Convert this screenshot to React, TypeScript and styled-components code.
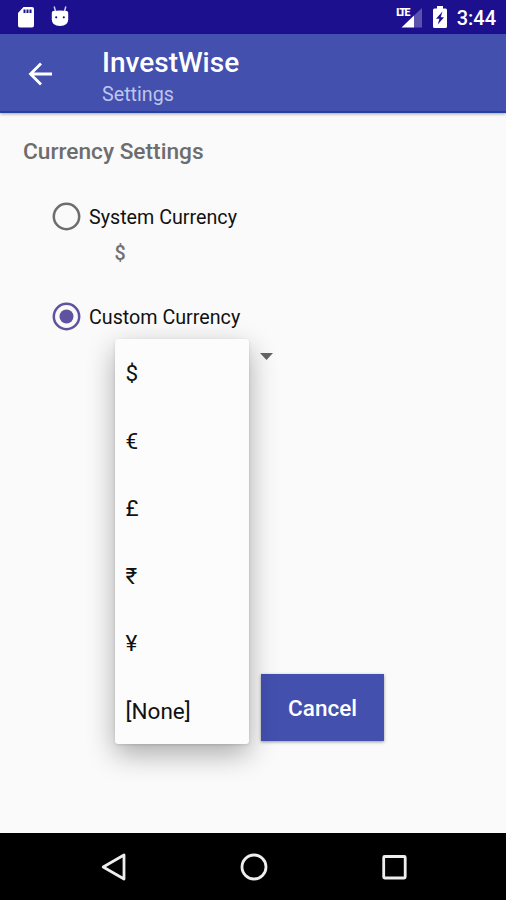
import React, { useState } from 'react';
import styled, { createGlobalStyle } from 'styled-components';

const GlobalStyle = createGlobalStyle`
  * { box-sizing: border-box; }
  html, body { margin: 0; padding: 0; overflow: hidden; }
  button { font: inherit; border: 0; padding: 0; background: none; }
`;

const Screen = styled.div`
  display: flex;
  flex-direction: column;
  width: 506px;
  height: 900px;
  background: #fafafa;
  font-family: Roboto, 'Liberation Sans', sans-serif;
  color: #111;
`;

const StatusBar = styled.header`
  display: flex;
  justify-content: space-between;
  flex: 0 0 34px;
  height: 34px;
  padding: 0 10px 0 17px;
  background: #1d108f;
`;

const StatusGroup = styled.div<{ $gap: number }>`
  display: flex;
  align-items: center;
  gap: ${(p) => p.$gap}px;
`;

const Clock = styled.span`
  font-size: 20px;
  font-weight: 500;
  line-height: 32px;
  color: #fff;
  padding-top: 2px;
`;

const AppBar = styled.div`
  display: flex;
  flex: 0 0 79px;
  padding-left: 28px;
  background: #4350ae;
  border-bottom: 2px solid #2541a0;
  box-shadow: 0 1px 3px rgba(0, 0, 0, 0.35);
`;

const BackButton = styled.button`
  display: flex;
  width: 74px;
  height: 77px;
  padding-top: 2px;
  align-items: center;
`;

const Titles = styled.div`
  display: flex;
  flex-direction: column;
  padding-top: 13px;
`;

const Title = styled.h1`
  margin: 0;
  font-size: 28px;
  font-weight: 500;
  line-height: 32px;
  color: #fff;
`;

const Subtitle = styled.span`
  font-size: 19.7px;
  line-height: 24px;
  padding-top: 4px;
  color: #bfc5ea;
`;

const Content = styled.main`
  flex: 1;
  padding: 24px 23px 0;
`;

const Heading = styled.h2`
  margin: 0;
  font-size: 22.7px;
  font-weight: 500;
  line-height: 30px;
  color: #6d6d6d;
`;

const Option = styled.label<{ $top: number }>`
  display: flex;
  align-items: flex-start;
  gap: 8px;
  height: 30px;
  margin: ${(p) => p.$top}px 0 0 29px;
  font-size: 19.7px;
  line-height: 30px;
`;

const RadioRing = styled.svg`
  flex: none;
  margin-top: -1px;
`;

const SystemValue = styled.div`
  margin: 6px 0 0 91.5px;
  font-size: 19.7px;
  font-weight: 500;
  line-height: 30px;
  color: #707070;
`;

const Spinner = styled.div`
  position: relative;
  display: flex;
  align-items: center;
  height: 48px;
  margin: -1px 0 0 91px;
  padding-left: 146px;
`;

const Menu = styled.ul`
  position: absolute;
  top: 7px;
  left: 0.6px;
  width: 134.8px;
  height: 405px;
  margin: 0;
  padding: 0;
  list-style: none;
  border-radius: 3px;
  background: #fcfcfc;
  box-shadow: 0 10px 28px rgba(0, 0, 0, 0.32), 0 1px 3px rgba(0, 0, 0, 0.12);
`;

const MenuItem = styled.li`
  height: 67.5px;
  padding-left: 11px;
  font-size: 22.5px;
  line-height: 69px;
`;

const Actions = styled.div`
  display: flex;
  padding: 294px 0 0 238px;
`;

const CancelButton = styled.button`
  width: 123px;
  height: 67px;
  background: #4350ae;
  color: #fff;
  font-size: 22.5px;
  font-weight: 500;
  line-height: 68px;
  box-shadow: 0 1px 3px rgba(0, 0, 0, 0.4);
`;

const NavBar = styled.nav`
  display: flex;
  justify-content: space-between;
  align-items: center;
  flex: 0 0 67px;
  padding: 0 97.3px 0 98.7px;
  background: #000;
`;

const NavButton = styled.button`
  display: flex;
`;

const SdCardIcon = () => (
  <svg width="18" height="22" viewBox="0 0 18 22">
    <path fill="#fff" fillRule="evenodd" d="M6.500 1H15q2 0 2 2v16.500q0 2-2 2H3q-2 0-2-2V7zM6.500 3.500v3.500h2V3.500zm3 0v3.500h2V3.500zm3 0v3.500h2V3.500z" />
  </svg>
);

const DebugIcon = () => (
  <svg width="18" height="22" viewBox="0 0 18 22">
    <path d="M3.200 0.500l1.300 5M14.800 0.500l-1.300 5" stroke="#cfcaf8" strokeWidth="1.500" />
    <path fill="#fff" d="M2 5q3-.5 7-.5t7 .5q1.200.5 1.200 2v6.500q0 6.500-8.200 6.500T.8 13.500V7q0-1.500 1.200-2z" />
    <circle cx="5.200" cy="11.300" r="1.100" fill="#1d108f" />
    <circle cx="12.800" cy="11.300" r="1.100" fill="#1d108f" />
  </svg>
);

const SignalBox = styled.span`
  position: relative;
  display: flex;
  width: 27px;
  height: 34px;
`;

const LteLabel = styled.span`
  position: absolute;
  top: 7px;
  left: 0.5px;
  font-size: 10.5px;
  font-weight: 900;
  line-height: 12px;
  letter-spacing: -1.5px;
  color: #fff;
`;

const SignalIcon = () => (
  <SignalBox>
    <svg width="27" height="34" viewBox="0 0 27 34">
      <path d="M26 8v19.500H18V15.500z" fill="#5c52ad" />
      <path d="M18 15.500v12H5.500z" fill="#fff" />
    </svg>
    <LteLabel>LTE</LteLabel>
  </SignalBox>
);

const BatteryIcon = () => (
  <svg width="16" height="22" viewBox="0 0 16 22">
    <path fill="#fff" d="M5 0h6v2.500h2.500q1.500 0 1.500 1.500v16.500q0 1.500-1.500 1.500h-11Q1 22 1 20.500V4q0-1.500 1.500-1.500H5z" />
    <path fill="#1d108f" d="M10.500 5.500L4 12.800h3.400L5.800 18.500l6.200-7.300H8.700z" />
  </svg>
);

const Radio = ({ checked }: { checked: boolean }) => (
  <RadioRing width="29" height="29" viewBox="0 0 29 29">
    <circle cx="14.500" cy="14.500" r="12.700" fill="none" strokeWidth="2.500" stroke={checked ? '#5f529f' : '#6d6d6d'} />
    {checked && <circle cx="14.500" cy="14.500" r="7" fill="#5f529f" />}
  </RadioRing>
);

const currencies = ['$', '€', '£', '₹', '¥', '[None]'];

export default function App() {
  const [mode, setMode] = useState<'system' | 'custom'>('custom');
  return (
    <Screen>
      <GlobalStyle />
      <StatusBar>
        <StatusGroup $gap={16}>
          <SdCardIcon />
          <DebugIcon />
        </StatusGroup>
        <StatusGroup $gap={9}>
          <SignalIcon />
          <BatteryIcon />
          <Clock>3:44</Clock>
        </StatusGroup>
      </StatusBar>
      <AppBar>
        <BackButton aria-label="Back">
          <svg width="24" height="24" viewBox="0 0 24 24" fill="none" stroke="#fff" strokeWidth="2.800">
            <path d="M24 12H3M13 1.500L2.500 12 13 22.500" />
          </svg>
        </BackButton>
        <Titles>
          <Title>InvestWise</Title>
          <Subtitle>Settings</Subtitle>
        </Titles>
      </AppBar>
      <Content>
        <Heading>Currency Settings</Heading>
        <Option $top={36} onClick={() => setMode('system')}>
          <Radio checked={mode === 'system'} />
          System Currency
        </Option>
        <SystemValue>$</SystemValue>
        <Option $top={34} onClick={() => setMode('custom')}>
          <Radio checked={mode === 'custom'} />
          Custom Currency
        </Option>
        <Spinner>
          <svg width="13" height="7" viewBox="0 0 13 7">
            <path d="M0 0h13L6.500 7z" fill="#666" />
          </svg>
          <Menu>
            {currencies.map((c) => (
              <MenuItem key={c}>{c}</MenuItem>
            ))}
          </Menu>
        </Spinner>
        <Actions>
          <CancelButton>Cancel</CancelButton>
        </Actions>
      </Content>
      <NavBar>
        <NavButton aria-label="Back">
          <svg width="30" height="30" viewBox="0 0 30 30" fill="none" stroke="#eee" strokeWidth="2.800" strokeLinejoin="round">
            <path d="M25 3v24L4.200 15z" />
          </svg>
        </NavButton>
        <NavButton aria-label="Home">
          <svg width="30" height="30" viewBox="0 0 30 30" fill="none" stroke="#eee" strokeWidth="2.800">
            <circle cx="15" cy="15" r="12" />
          </svg>
        </NavButton>
        <NavButton aria-label="Recent apps">
          <svg width="30" height="30" viewBox="0 0 30 30" fill="none" stroke="#eee" strokeWidth="2.800">
            <rect x="4.700" y="4.500" width="21.500" height="21.500" rx="1" />
          </svg>
        </NavButton>
      </NavBar>
    </Screen>
  );
}
